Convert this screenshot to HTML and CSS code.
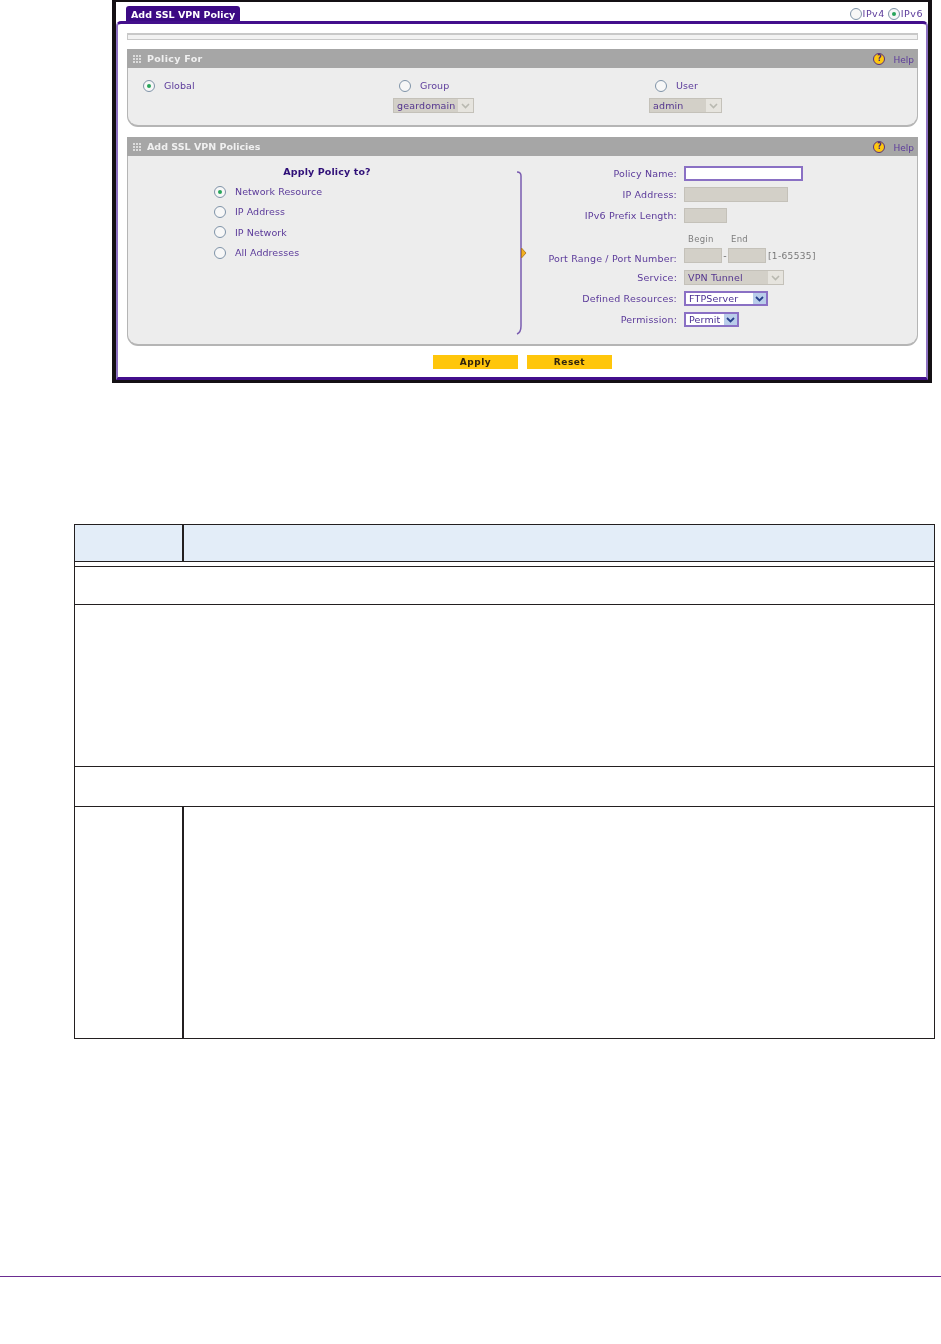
FILE: index.html
```html
<!DOCTYPE html>
<html lang="en">
<head>
<meta charset="utf-8">
<title>Add SSL VPN Policy</title>
<link rel="stylesheet" href="styles.css">
</head>
<body>
<div class="shot">
  <div class="top">
    <div class="tab">Add SSL VPN Policy</div>
    <div class="ipswitch">
      <span class="radio"></span><span class="iplabel">IPv4</span>
      <span class="radio on second"></span><span class="iplabel">IPv6</span>
    </div>
  </div>
  <div class="frame">
    <div class="thinbar"></div>

    <div class="head">
      <svg class="grip" width="8" height="8" viewBox="0 0 8 8"><path d="M0 0h2v2H0zM3 0h2v2H3zM6 0h2v2H6zM0 3h2v2H0zM3 3h2v2H3zM6 3h2v2H6zM0 6h2v2H0zM3 6h2v2H3zM6 6h2v2H6z" fill="#dcdcdc"/></svg>
      <span class="headtitle">Policy For</span>
      <span class="help"><span class="helpicon">?</span><span class="helptext">Help</span></span>
    </div>
    <div class="panel panel-for">
      <div class="forcol">
        <div class="opt"><span class="radio on"></span><span class="lbl">Global</span></div>
      </div>
      <div class="forcol">
        <div class="opt"><span class="radio"></span><span class="lbl">Group</span></div>
        <div class="select off w-group"><span class="val">geardomain</span><span class="arrow"><svg width="9" height="6" viewBox="0 0 9 6"><path d="M1 1l3.5 3.5L8 1" fill="none" stroke="#b9b9b0" stroke-width="1.6"/></svg></span></div>
      </div>
      <div class="forcol">
        <div class="opt"><span class="radio"></span><span class="lbl">User</span></div>
        <div class="select off w-user"><span class="val">admin</span><span class="arrow"><svg width="9" height="6" viewBox="0 0 9 6"><path d="M1 1l3.5 3.5L8 1" fill="none" stroke="#b9b9b0" stroke-width="1.6"/></svg></span></div>
      </div>
    </div>

    <div class="head second">
      <svg class="grip" width="8" height="8" viewBox="0 0 8 8"><path d="M0 0h2v2H0zM3 0h2v2H3zM6 0h2v2H6zM0 3h2v2H0zM3 3h2v2H3zM6 3h2v2H6zM0 6h2v2H0zM3 6h2v2H3zM6 6h2v2H6z" fill="#dcdcdc"/></svg>
      <span class="headtitle">Add SSL VPN Policies</span>
      <span class="help"><span class="helpicon">?</span><span class="helptext">Help</span></span>
    </div>
    <div class="panel panel-add">
      <div class="applycol">
        <div class="applytitle">Apply Policy to?</div>
        <div class="applylist">
          <div class="opt"><span class="radio on"></span><span class="lbl">Network Resource</span></div>
          <div class="opt"><span class="radio"></span><span class="lbl">IP Address</span></div>
          <div class="opt"><span class="radio"></span><span class="lbl">IP Network</span></div>
          <div class="opt"><span class="radio"></span><span class="lbl">All Addresses</span></div>
        </div>
      </div>
      <svg class="bracket" width="12" height="164" viewBox="0 0 12 164">
        <path d="M1 1c3 0 4 1.500 4 4v150c0 4-1.500 7-4 8" fill="none" stroke="#7a5cb0" stroke-width="1.500"/>
        <path d="M5.500 77l4.500 5-4.500 5z" fill="#f2b01e" stroke="#a8701a" stroke-width=".8"/>
      </svg>
      <div class="fields">
        <div class="row"><span class="flabel">Policy Name:</span><span class="input live w-name"></span></div>
        <div class="row"><span class="flabel">IP Address:</span><span class="input w-ip"></span></div>
        <div class="row"><span class="flabel">IPv6 Prefix Length:</span><span class="input w-prefix"></span></div>
        <div class="row caprow"><span class="flabel"></span><span class="cap cap-begin">Begin</span><span class="cap">End</span></div>
        <div class="row portrow"><span class="flabel lowered">Port Range / Port Number:</span><span class="input w-port"></span><span class="dash">-</span><span class="input w-port"></span><span class="range">[1-65535]</span></div>
        <div class="row selrow"><span class="flabel">Service:</span><div class="select off w-service"><span class="val">VPN Tunnel</span><span class="arrow"><svg width="9" height="6" viewBox="0 0 9 6"><path d="M1 1l3.500 3.500L8 1" fill="none" stroke="#b9b9b0" stroke-width="1.600"/></svg></span></div></div>
        <div class="row selrow"><span class="flabel">Defined Resources:</span><div class="select live w-defined"><span class="val">FTPServer</span><span class="arrow"><svg width="9" height="6" viewBox="0 0 9 6"><path d="M1 1l3.500 3.500L8 1" fill="none" stroke="#27408b" stroke-width="1.800"/></svg></span></div></div>
        <div class="row selrow"><span class="flabel">Permission:</span><div class="select live w-permit"><span class="val">Permit</span><span class="arrow"><svg width="9" height="6" viewBox="0 0 9 6"><path d="M1 1l3.500 3.500L8 1" fill="none" stroke="#27408b" stroke-width="1.800"/></svg></span></div></div>
      </div>
    </div>

    <div class="actions">
      <span class="btn">Apply</span>
      <span class="btn">Reset</span>
    </div>
  </div>
</div>

<table class="spec">
  <tr class="r-head"><td class="c1"></td><td></td></tr>
  <tr class="r-gap"><td colspan="2"></td></tr>
  <tr class="r-a"><td colspan="2"></td></tr>
  <tr class="r-b"><td colspan="2"></td></tr>
  <tr class="r-c"><td colspan="2"></td></tr>
  <tr class="r-d"><td class="c1"></td><td></td></tr>
</table>

<div class="footer"></div>
</body>
</html>
```
FILE: styles.css
```css
* { box-sizing: border-box; }
html, body { margin: 0; padding: 0; background: #fff; }
body { height: 1344px; overflow: hidden; font-family: "DejaVu Sans", Verdana, sans-serif; }

.shot {
  margin-left: 112px;
  width: 820px;
  height: 383px;
  border: solid #141014;
  border-width: 2px 4px 3px 4px;
  background: #fff;
  font-size: 9.5px;
  color: #5b3a9a;
  filter: blur(.4px);
}
.top { display: flex; justify-content: space-between; height: 19px; padding: 0 5px 0 10px; }
.tab {
  margin-top: 4px;
  width: 114px;
  height: 15px;
  line-height: 18px;
  padding-left: 5px;
  background: #3c0a84;
  color: #fff;
  font-weight: bold;
  font-size: 9.5px;
  border-radius: 3px 3px 0 0;
  white-space: nowrap;
}
.ipswitch { display: flex; align-items: center; margin-top: 5px; height: 13px; }
.iplabel { margin-left: 1px; color: #5b3a9a; font-size: 9.5px; letter-spacing: .5px; }
.radio.second { margin-left: 3px; }

.frame {
  height: 359px;
  padding: 9px 8px 0 9px;
  border: solid #8d72c2;
  border-width: 3px 2px 3px 2px;
  border-top-color: #430f8c;
  border-bottom-color: #430f8c;
  border-radius: 5px 5px 0 0;
}
.thinbar { height: 7px; background: #f2f2f2; border: 1px solid #c8c8c8; border-top-width: 2px; }

.head {
  margin-top: 9px;
  height: 19px;
  display: flex;
  align-items: center;
  padding: 0 4px 0 6px;
  background: #a6a6a6;
  color: #f0f0f0;
}
.head.second { margin-top: 10px; }
.grip { flex: none; }
.headtitle { margin-left: 6px; font-weight: bold; font-size: 9.5px; letter-spacing: .3px; }
.head.second .headtitle { letter-spacing: 0; }
.help { margin-left: auto; display: flex; align-items: center; }
.helpicon {
  width: 12px;
  height: 12px;
  border-radius: 50%;
  border: 1.500px solid #57307f;
  background: #fdc70f;
  color: #4b2a74;
  font-size: 8px;
  font-weight: bold;
  line-height: 9px;
  text-align: center;
}
.helptext { margin-left: 8px; color: #5b3a9a; padding-top: 2px; font-size: 9px; }

.panel {
  background: #ededed;
  border: solid #b5b5b5;
  border-width: 0 1px 2px 1px;
  border-radius: 0 0 11px 11px;
}
.panel-for { display: flex; height: 59px; padding: 11px 0 0 9px; }
.forcol { width: 256px; }
.opt { display: flex; align-items: center; height: 14px; padding-left: 6px; }
.lbl { margin-left: 9px; letter-spacing: .06px; }
.forcol .lbl { margin-bottom: 2px; }
.radio {
  flex: none;
  width: 12px;
  height: 12px;
  border-radius: 50%;
  border: 1.500px solid #7f93a8;
  background: #f7f7f7;
  display: inline-flex;
  align-items: center;
  justify-content: center;
}
.radio.on::after { content: ""; width: 4px; height: 4px; border-radius: 50%; background: #27a55a; }

.select { display: flex; align-items: center; height: 15px; font-size: 9.5px; color: #54358f; letter-spacing: .15px; }
.forcol .select { margin-top: 5px; }
.select .val { flex: 1; padding-left: 3px; white-space: nowrap; }
.select .arrow { display: flex; align-items: center; justify-content: center; width: 15px; height: 100%; }
.select.off { background: #d3d0c8; border: 1px solid #c4c1b9; }
.select.off .arrow { background: #e6e4de; }
.select.live { background: #fff; border: 2px solid #8a70c4; color: #4a2f91; }
.select.live .arrow { background: #b9cdea; width: 13px; }
.w-group { width: 81px; }
.w-user { width: 73px; }
.w-service { width: 100px; }
.w-defined { width: 84px; }
.w-permit { width: 55px; }

.panel-add { display: flex; height: 190px; padding: 10px 0 0; }
.applycol { width: 388px; flex: none; }
.applytitle { width: 398px; height: 12px; line-height: 12px; text-align: center; font-weight: bold; color: #2f0f78; letter-spacing: .12px; }
.applylist { margin: 6.500px 0 0 80px; display: flex; flex-direction: column; gap: 6.400px; }
.bracket { flex: none; margin-top: 5px; }
.fields { flex: 1; }
.row { display: flex; align-items: center; height: 15px; margin-top: 6px; }
.row:first-child { margin-top: 0; }
.flabel { flex: none; width: 149px; margin-right: 7px; text-align: right; white-space: nowrap; letter-spacing: .17px; }
.flabel.lowered { position: relative; top: 3px; }
.caprow { height: 13px; margin-top: 9px; }
.portrow { margin-top: 3px; }
.selrow { margin-top: 6px; }
.selrow:nth-child(6) { margin-top: 7px; }
.cap { color: #7d7d7d; font-size: 8.500px; letter-spacing: .3px; }
.cap-begin { margin-left: 4px; width: 43px; }
.input { display: block; height: 15px; background: #d3d0c8; border: 1px solid #c4c1b9; flex: none; }
.input.live { background: #fff; border: 2px solid #8a70c4; }
.w-name { width: 119px; }
.w-ip { width: 104px; }
.w-prefix { width: 43px; }
.w-port { width: 38px; }
.dash { width: 6px; text-align: center; color: #666; }
.range { margin-left: 2px; color: #777; font-size: 9px; letter-spacing: .35px; }

.actions { display: flex; justify-content: center; gap: 9px; margin-top: 9px; }
.btn {
  width: 85px;
  height: 14px;
  line-height: 15px;
  text-align: center;
  background: #ffc60b;
  color: #33240c;
  font-weight: bold;
  font-size: 9px;
  letter-spacing: .5px;
}

.spec {
  margin: 141px 0 0 74px;
  width: 861px;
  border-collapse: collapse;
  table-layout: fixed;
}
.spec td { border: 1px solid #231f20; padding: 0; }
.spec .c1 { width: 108px; border-right-width: 2px; }
.r-head { height: 37px; }
.r-head td { background: #e3edf8; }
.r-gap { height: 5px; }
.r-a { height: 38px; }
.r-b { height: 162px; }
.r-c { height: 40px; }
.r-d { height: 232px; }

.footer { margin-top: 237px; height: 1px; background: #6a2c91; }
```
